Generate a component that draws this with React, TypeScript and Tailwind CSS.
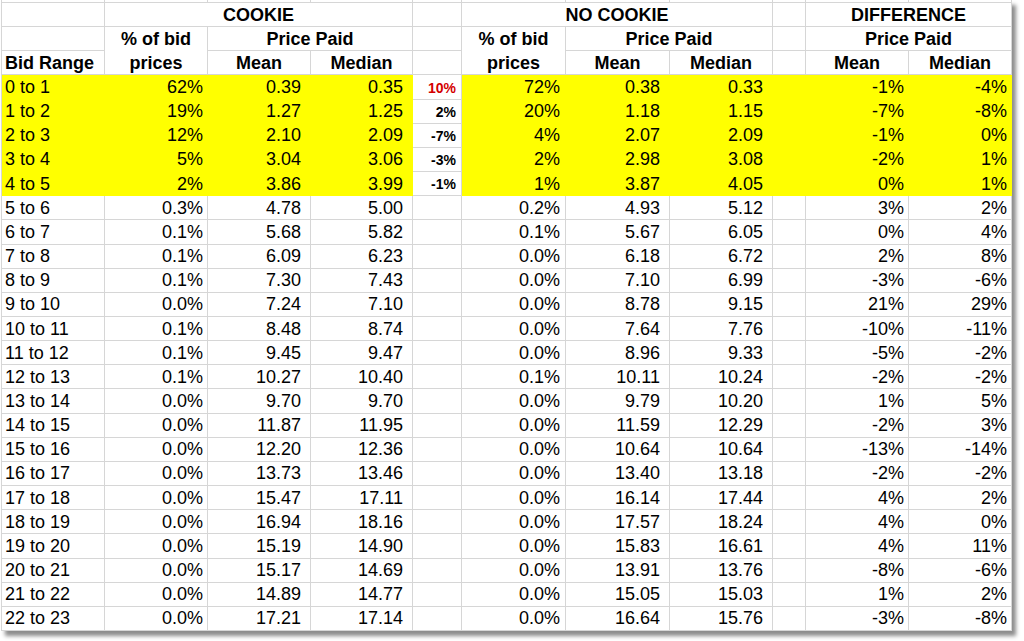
import React from 'react';

type Row = [string, string, string, string, string, string, string, string, string, string];

const rows: Row[] = [
  ['0 to 1', '62%', '0.39', '0.35', '10%', '72%', '0.38', '0.33', '-1%', '-4%'],
  ['1 to 2', '19%', '1.27', '1.25', '2%', '20%', '1.18', '1.15', '-7%', '-8%'],
  ['2 to 3', '12%', '2.10', '2.09', '-7%', '4%', '2.07', '2.09', '-1%', '0%'],
  ['3 to 4', '5%', '3.04', '3.06', '-3%', '2%', '2.98', '3.08', '-2%', '1%'],
  ['4 to 5', '2%', '3.86', '3.99', '-1%', '1%', '3.87', '4.05', '0%', '1%'],
  ['5 to 6', '0.3%', '4.78', '5.00', '', '0.2%', '4.93', '5.12', '3%', '2%'],
  ['6 to 7', '0.1%', '5.68', '5.82', '', '0.1%', '5.67', '6.05', '0%', '4%'],
  ['7 to 8', '0.1%', '6.09', '6.23', '', '0.0%', '6.18', '6.72', '2%', '8%'],
  ['8 to 9', '0.1%', '7.30', '7.43', '', '0.0%', '7.10', '6.99', '-3%', '-6%'],
  ['9 to 10', '0.0%', '7.24', '7.10', '', '0.0%', '8.78', '9.15', '21%', '29%'],
  ['10 to 11', '0.1%', '8.48', '8.74', '', '0.0%', '7.64', '7.76', '-10%', '-11%'],
  ['11 to 12', '0.1%', '9.45', '9.47', '', '0.0%', '8.96', '9.33', '-5%', '-2%'],
  ['12 to 13', '0.1%', '10.27', '10.40', '', '0.1%', '10.11', '10.24', '-2%', '-2%'],
  ['13 to 14', '0.0%', '9.70', '9.70', '', '0.0%', '9.79', '10.20', '1%', '5%'],
  ['14 to 15', '0.0%', '11.87', '11.95', '', '0.0%', '11.59', '12.29', '-2%', '3%'],
  ['15 to 16', '0.0%', '12.20', '12.36', '', '0.0%', '10.64', '10.64', '-13%', '-14%'],
  ['16 to 17', '0.0%', '13.73', '13.46', '', '0.0%', '13.40', '13.18', '-2%', '-2%'],
  ['17 to 18', '0.0%', '15.47', '17.11', '', '0.0%', '16.14', '17.44', '4%', '2%'],
  ['18 to 19', '0.0%', '16.94', '18.16', '', '0.0%', '17.57', '18.24', '4%', '0%'],
  ['19 to 20', '0.0%', '15.19', '14.90', '', '0.0%', '15.83', '16.61', '4%', '11%'],
  ['20 to 21', '0.0%', '15.17', '14.69', '', '0.0%', '13.91', '13.76', '-8%', '-6%'],
  ['21 to 22', '0.0%', '14.89', '14.77', '', '0.0%', '15.05', '15.03', '1%', '2%'],
  ['22 to 23', '0.0%', '17.21', '17.14', '', '0.0%', '16.64', '15.76', '-3%', '-8%'],
];

interface CellProps {
  children?: React.ReactNode;
  className?: string;
  yellow?: boolean;
}

const Cell = ({ children, className = '', yellow = false }: CellProps) => (
  <div
    className={`flex items-center overflow-hidden whitespace-nowrap border-r border-b ${
      yellow ? 'bg-[#ffff00] border-[#ffff00]' : 'bg-white border-[#d6d6d6]'
    } ${className}`}
  >
    {children}
  </div>
);

const Head = ({ children, className = '' }: CellProps) => (
  <Cell className={`justify-center font-bold ${className}`}>{children}</Cell>
);

export default function App() {
  return (
    <div className="min-h-screen bg-white">
      <div
        className="ml-px grid h-[631px] w-[1011px] grid-cols-[103px_103px_103px_102px_49px_104px_104px_103px_33px_103px_103px] grid-rows-[3px_repeat(26,minmax(0,1fr))] border-l border-[#d6d6d6] text-[18px] leading-none text-black shadow-[4px_5px_4px_rgba(0,0,0,0.45)]"
        style={{ fontFamily: '"Liberation Sans", Arial, sans-serif' }}
      >
        {/* cut-off row above the sheet */}
        {Array.from({ length: 11 }).map((_, i) => (
          <Cell key={`top-${i}`} />
        ))}

        {/* header row 1 */}
        <Cell />
        <Head className="col-span-3">COOKIE</Head>
        <Cell />
        <Head className="col-span-3">NO COOKIE</Head>
        <Cell />
        <Head className="col-span-2">DIFFERENCE</Head>

        {/* header row 2 */}
        <Cell />
        <Head className="row-span-2 flex-col leading-[24px]">
          <span>% of bid</span>
          <span>prices</span>
        </Head>
        <Head className="col-span-2">Price Paid</Head>
        <Cell />
        <Head className="row-span-2 flex-col leading-[24px]">
          <span>% of bid</span>
          <span>prices</span>
        </Head>
        <Head className="col-span-2">Price Paid</Head>
        <Cell />
        <Head className="col-span-2">Price Paid</Head>

        {/* header row 3 */}
        <Cell className="pl-[3px] font-bold">Bid Range</Cell>
        <Head>Mean</Head>
        <Head>Median</Head>
        <Cell />
        <Head>Mean</Head>
        <Head>Median</Head>
        <Cell />
        <Head>Mean</Head>
        <Head>Median</Head>

        {/* data */}
        {rows.map((r, i) => {
          const y = i < 5;
          return (
            <React.Fragment key={r[0]}>
              <Cell yellow={y} className="pl-[3px]">{r[0]}</Cell>
              <Cell yellow={y} className="justify-end pr-1">{r[1]}</Cell>
              <Cell yellow={y} className="justify-end pr-[9px]">{r[2]}</Cell>
              <Cell yellow={y} className="justify-end pr-[9px]">{r[3]}</Cell>
              <Cell
                className={`justify-end pr-[5px] pt-px text-[14px] font-bold ${
                  i === 0 ? 'text-[#d40000]' : 'text-black'
                }`}
              >
                {r[4]}
              </Cell>
              <Cell yellow={y} className="justify-end pr-[5px]">{r[5]}</Cell>
              <Cell yellow={y} className="justify-end pr-[9px]">{r[6]}</Cell>
              <Cell yellow={y} className="justify-end pr-[9px]">{r[7]}</Cell>
              <Cell yellow={y} />
              <Cell yellow={y} className="justify-end pr-1">{r[8]}</Cell>
              <Cell yellow={y} className="justify-end pr-1">{r[9]}</Cell>
            </React.Fragment>
          );
        })}
      </div>
    </div>
  );
}
